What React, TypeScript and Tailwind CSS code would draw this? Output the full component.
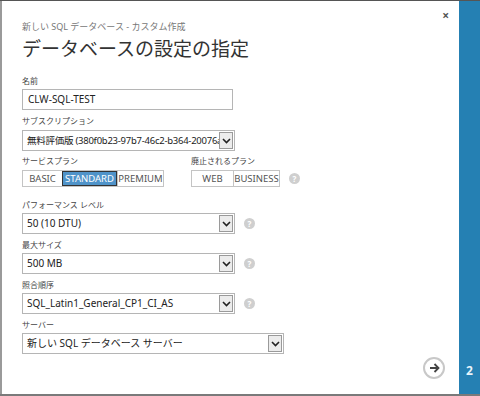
import React from 'react'

const font = { fontFamily: '"Noto Sans", "Noto Sans CJK JP", sans-serif' }

const Help = () => (
  <span className="ml-[9px] flex h-[11px] w-[11px] items-center justify-center rounded-full bg-[#cfcfcf] text-[8px] font-bold leading-none text-white">
    ?
  </span>
)

const Label = ({ children, className = '' }: { children: React.ReactNode; className?: string }) => (
  <div className={`h-[11px] text-[8px] leading-[11px] text-[#444] ${className}`}>{children}</div>
)

const Select = ({ value, width, help, tight }: { value: string; width: string; help?: boolean; tight?: boolean }) => (
  <div className="flex items-center">
    <div className={`flex h-[21px] ${width} items-center border border-[#b5b5b5] bg-white`}>
      <span
        className={`flex-1 overflow-hidden whitespace-nowrap pl-[4px] leading-[15px] text-[#222] ${
          tight ? 'text-[9.5px] tracking-[-0.25px]' : 'text-[10px]'
        }`}
      >
        {value}
      </span>
      <span className="mr-[1px] flex h-[17px] w-[14px] shrink-0 items-center justify-center border border-[#9a9a9a] bg-[#ececec]">
        <svg width="9" height="6" viewBox="0 0 9 6">
          <path d="M1 1 L4.5 4.5 L8 1" fill="none" stroke="#222" strokeWidth="1.6" />
        </svg>
      </span>
    </div>
    {help && <Help />}
  </div>
)

const Seg = ({ items, active }: { items: { label: string; w: string }[]; active?: string }) => (
  <div className="flex h-[17px] border border-[#c4c4c4]">
    {items.map((it, i) => (
      <div
        key={it.label}
        className={`flex ${it.w} items-center justify-center text-[9.5px] leading-none ${
          it.label === active
            ? 'border border-[#333] bg-[#4f93c9] text-white'
            : `text-[#555] ${i > 0 ? 'border-l border-[#c4c4c4]' : ''}`
        }`}
      >
        {it.label}
      </div>
    ))}
  </div>
)

export default function App() {
  return (
    <div style={font} className="flex h-[396px] w-[480px] border-t border-b-2 border-t-[#555] border-b-[#7a7a7a] bg-white">
      <div className="relative flex flex-1 flex-col border-l-2 border-[#9a9a9a] pl-[20px] pr-[14px]">
        <span className="absolute right-[10px] top-[9px] text-[12px] font-bold leading-none text-[#555]">×</span>
        <div className="mt-[20px] h-[12px] text-[9px] leading-[12px] text-[#777]">新しい SQL データベース - カスタム作成</div>
        <div className="mt-[3px] h-[26px] text-[19px] leading-[26px] text-[#333]">データベースの設定の指定</div>

        <Label className="mt-[13px]">名前</Label>
        <div className="mt-[3px] flex h-[21px] w-[211px] items-center border border-[#b5b5b5] pl-[5px] text-[10px] text-[#222]">
          CLW-SQL-TEST
        </div>

        <Label className="mt-[5px]">サブスクリプション</Label>
        <div className="mt-[4px]">
          <Select value="無料評価版 (380f0b23-97b7-46c2-b364-20076a" width="w-[213px]" tight />
        </div>

        <div className="mt-[4px] flex">
          <div className="w-[169px]">
            <Label>サービスプラン</Label>
            <div className="mt-[4px] flex">
              <Seg
                active="STANDARD"
                items={[
                  { label: 'BASIC', w: 'w-[39px]' },
                  { label: 'STANDARD', w: 'w-[55px]' },
                  { label: 'PREMIUM', w: 'w-[46px]' },
                ]}
              />
            </div>
          </div>
          <div>
            <Label>廃止されるプラン</Label>
            <div className="mt-[4px] flex items-center">
              <Seg
                items={[
                  { label: 'WEB', w: 'w-[41px]' },
                  { label: 'BUSINESS', w: 'w-[46px]' },
                ]}
              />
              <Help />
            </div>
          </div>
        </div>

        <Label className="mt-[12px]">パフォーマンス レベル</Label>
        <div className="mt-[3px]">
          <Select value="50 (10 DTU)" width="w-[213px]" help />
        </div>

        <Label className="mt-[5px]">最大サイズ</Label>
        <div className="mt-[3px]">
          <Select value="500 MB" width="w-[213px]" help />
        </div>

        <Label className="mt-[5px]">照合順序</Label>
        <div className="mt-[3px]">
          <Select value="SQL_Latin1_General_CP1_CI_AS" width="w-[213px]" help />
        </div>

        <Label className="mt-[5px]">サーバー</Label>
        <div className="mt-[3px]">
          <Select value="新しい SQL データベース サーバー" width="w-[262px]" />
        </div>

        <div className="mt-[3px] flex justify-end">
          <div className="flex h-[22px] w-[22px] items-center justify-center rounded-full border-2 border-[#c8c8c8]">
            <svg width="11" height="10" viewBox="0 0 11 10">
              <path d="M1 5 H9.5 M5.5 1 L9.5 5 L5.5 9" fill="none" stroke="#444" strokeWidth="1.8" />
            </svg>
          </div>
        </div>
      </div>
      <div className="flex w-[21px] flex-col items-center justify-end bg-[#2580b3] pb-[17px]">
        <span className="text-[12px] font-bold leading-none text-[#e8f4fb]">2</span>
      </div>
    </div>
  )
}
